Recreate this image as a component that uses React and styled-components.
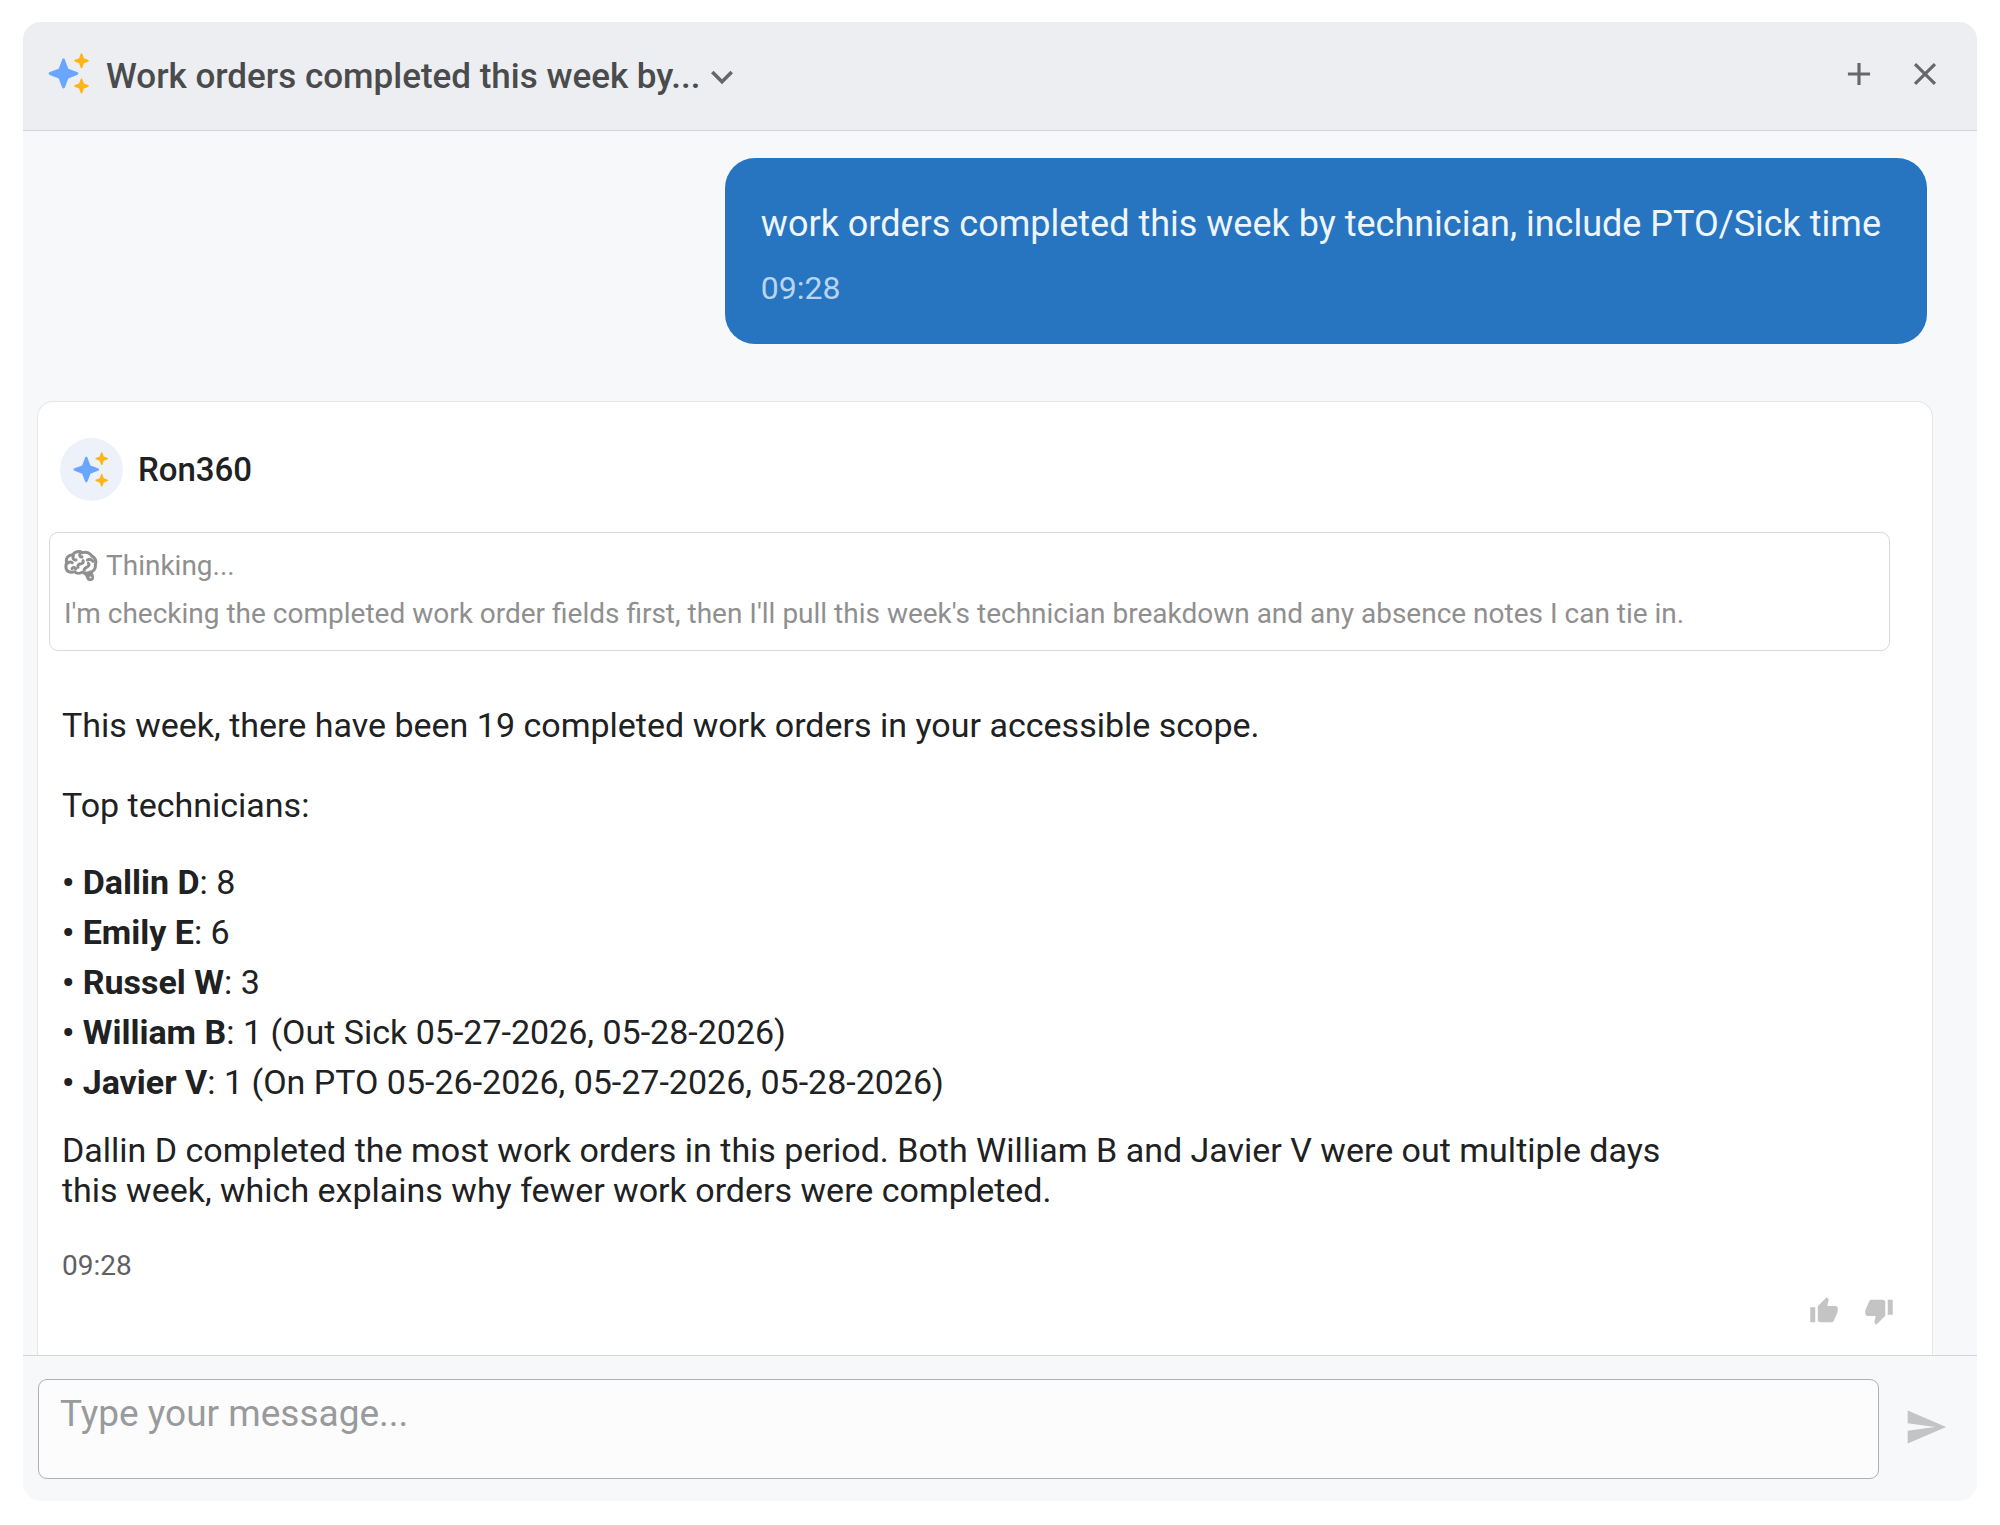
import { useState } from 'react';
import styled, { createGlobalStyle } from 'styled-components';
import { MdAdd, MdClose, MdExpandMore, MdSend, MdThumbUp, MdThumbDown } from 'react-icons/md';

const technicians = [
    { name: 'Dallin D', total: '8' },
    { name: 'Emily E', total: '6' },
    { name: 'Russel W', total: '3' },
    { name: 'William B', total: '1 (Out Sick 05-27-2026, 05-28-2026)' },
    { name: 'Javier V', total: '1 (On PTO 05-26-2026, 05-27-2026, 05-28-2026)' },
];

function Sparkles({ size }) {
    const star = 'c.5 0 .8.4 1 1l1.400 4 4 1.500c1.300.5 1.300 1.500 0 2l-4 1.500-1.400 4c-.5 1.300-1.500 1.300-2 0l-1.400-4-4-1.500c-1.300-.5-1.300-1.500 0-2l4-1.500 1.400-4c.2-.6.5-1 1-1z';

    return (
        <svg width={size} height={size} viewBox="0 0 42 42" aria-hidden="true">
            <path fill="#68a6ff" d="M15.5 5.5c.8 0 1.2.5 1.5 1.4l3.3 8.8 8.8 3.4c1.8.7 1.8 2.2 0 2.9l-8.8 3.4-3.3 8.8c-.7 1.8-2.3 1.8-3 0l-3.3-8.8L1.9 22c-1.8-.7-1.8-2.2 0-2.9l8.8-3.4L14 6.9c.3-.9.7-1.4 1.5-1.4z" />
            <path fill="#fdb515" d={'M33.5.3' + star} />
            <path fill="#fdb515" d={'M33.5 25.5' + star} />
        </svg>
    );
}

function Brain() {
    return (
        <svg width="34" height="32" viewBox="0 0 102 96" fill="none" stroke="#8f8f8f" strokeWidth="9" strokeLinecap="round" strokeLinejoin="round" aria-hidden="true">
            <path d="M8 38C4 24 14 14 26 14C32 4 46 2 56 8C68 4 80 10 83 18C94 22 98 34 94 44C96 56 88 66 78 66C72 72 62 72 56 66C46 72 36 70 32 65C18 70 6 64 6 52C5 47 6 43 8 38Z" />
            <path d="M9 41C14 36 20 35 25 38M28 17C25 25 29 31 36 30M49 9C45 16 49 22 54 21M42 52C40 45 45 41 52 41C58 39 59 35 57 32M24 56C27 51 33 52 35 57M70 30C77 26 83 29 87 34M61 60C60 55 67 53 71 50C76 46 76 42 73 40" />
            <path fill="#8f8f8f" d="M62 70C67 73 70 77 71 83C73 91 85 91 86 83C87 77 83 73 80 68Z" />
            <circle cx="79" cy="82" r="2" stroke="#ffffff" strokeWidth="2" />
        </svg>
    );
}

function App() {
    const [message, setMessage] = useState('');
    const [vote, setVote] = useState(null);

    return (
        <>
            <GlobalStyle />
            <Panel>
                <Header>
                    <Sparkles size={42} />
                    <Title>
                        <TitleButton type="button">
                            Work orders completed this week by...
                            <MdExpandMore size="44px" />
                        </TitleButton>
                    </Title>
                    <HeaderActions>
                        <IconButton type="button" aria-label="New chat"><MdAdd size="38px" /></IconButton>
                        <IconButton type="button" aria-label="Close"><MdClose size="38px" /></IconButton>
                    </HeaderActions>
                </Header>

                <Conversation>
                    <UserMessage>
                        <p>work orders completed this week by technician, include PTO/Sick time</p>
                        <UserTime>09:28</UserTime>
                    </UserMessage>

                    <Reply>
                        <ReplyHeader>
                            <Avatar><Sparkles size={36} /></Avatar>
                            <Name>Ron360</Name>
                        </ReplyHeader>

                        <Thinking>
                            <ThinkingTitle><Brain />Thinking...</ThinkingTitle>
                            <p>I'm checking the completed work order fields first, then I'll pull this week's technician breakdown and any absence notes I can tie in.</p>
                        </Thinking>

                        <Answer>
                            <p>This week, there have been 19 completed work orders in your accessible scope.</p>
                            <p>Top technicians:</p>
                            <List>
                                {technicians.map(({ name, total }) => (
                                    <li key={name}><b>• {name}</b>: {total}</li>
                                ))}
                            </List>
                            <p>Dallin D completed the most work orders in this period. Both William B and Javier V were out multiple days this week, which explains why fewer work orders were completed.</p>
                        </Answer>
                        <ReplyTime>09:28</ReplyTime>

                        <Votes>
                            <VoteButton type="button" aria-label="Good answer" $active={vote === 'up'} onClick={() => setVote('up')}>
                                <MdThumbUp size="30px" />
                            </VoteButton>
                            <VoteButton type="button" aria-label="Bad answer" $active={vote === 'down'} onClick={() => setVote('down')}>
                                <MdThumbDown size="30px" />
                            </VoteButton>
                        </Votes>
                    </Reply>
                </Conversation>

                <Composer onSubmit={e => e.preventDefault()}>
                    <MessageBox
                        aria-label="Message"
                        placeholder="Type your message..."
                        value={message}
                        onChange={e => setMessage(e.target.value)}
                    />
                    <SendButton type="submit" aria-label="Send"><MdSend size="44px" /></SendButton>
                </Composer>
            </Panel>
        </>
    );
}

export default App;

const GlobalStyle = createGlobalStyle`
    * {
        box-sizing: border-box;
    }

    body {
        margin: 0;
        background: #ffffff;
        font-family: Roboto, sans-serif;
        color: #202122;
    }

    p, h1, h2, ul {
        margin: 0;
        padding: 0;
    }

    button {
        padding: 0;
        border: none;
        background: none;
        font: inherit;
        color: inherit;
        cursor: pointer;
    }

    svg {
        display: block;
        flex-shrink: 0;
    }
`;

const Panel = styled.main`
    display: flex;
    flex-direction: column;
    min-height: calc(100vh - 46px);
    margin: 22px 23px 24px;
    background: #f7f8fa;
    border-radius: 18px;
    overflow: hidden;
`;

const Header = styled.header`
    display: flex;
    align-items: center;
    height: 109px;
    padding: 0 33px 4px 25px;
    background: #edeef2;
    border-bottom: 1px solid #d3d5d9;
`;

const Title = styled.h1`
    padding: 6px 0 0 16px;
    font-size: 35px;
    font-weight: 500;
    line-height: 40px;
    color: #4a4b4c;
`;

const TitleButton = styled.button`
    display: flex;
    align-items: center;

    svg {
        color: #666769;
    }
`;

const HeaderActions = styled.div`
    display: flex;
    gap: 28px;
    margin-left: auto;
`;

const IconButton = styled.button`
    color: #666769;
`;

const Conversation = styled.section`
    display: flex;
    flex: 1;
    flex-direction: column;
    padding: 27px 44px 0 14px;
`;

const UserMessage = styled.article`
    display: flex;
    flex-direction: column;
    align-self: flex-end;
    gap: 24px;
    margin-right: 6px;
    padding: 46px 46px 36px 36px;
    background: #2775c1;
    border-radius: 30px;
    font-size: 36px;
    line-height: 40px;
    color: #eef5fc;
`;

const UserTime = styled.time`
    font-size: 32px;
    color: #b9d4ee;
`;

const Reply = styled.article`
    display: flex;
    flex: 1;
    flex-direction: column;
    margin-top: 57px;
    padding: 36px 38px 26px 11px;
    background: #ffffff;
    border: 1px solid #e4e6e9;
    border-bottom: none;
    border-radius: 16px 16px 0 0;
`;

const ReplyHeader = styled.div`
    display: flex;
    align-items: center;
    gap: 15px;
    padding-left: 11px;
`;

const Avatar = styled.div`
    display: flex;
    align-items: center;
    justify-content: center;
    width: 63px;
    height: 63px;
    padding-right: 2px;
    border-radius: 50%;
    background: #ecf1fa;
`;

const Name = styled.h2`
    font-size: 33px;
    font-weight: 500;
    line-height: 40px;
`;

const Thinking = styled.section`
    display: flex;
    flex-direction: column;
    gap: 12px;
    margin: 31px 4px 0 0;
    padding: 15px 14px 18px;
    border: 1px solid #d8d9da;
    border-radius: 9px;
    font-size: 28px;
    line-height: 36px;
    color: #8f8f8f;
`;

const ThinkingTitle = styled.div`
    display: flex;
    align-items: center;
    gap: 8px;
`;

const Answer = styled.div`
    display: flex;
    flex-direction: column;
    gap: 40px;
    padding: 54px 180px 0 13px;
    font-size: 34px;
    line-height: 40px;
`;

const List = styled.ul`
    margin: -8px 0 -17px;
    list-style: none;
    line-height: 50px;
`;

const ReplyTime = styled.time`
    padding: 38px 0 0 13px;
    font-size: 28px;
    line-height: 36px;
    color: #5f6062;
`;

const Votes = styled.div`
    display: flex;
    justify-content: flex-end;
    gap: 25px;
    margin-top: 12px;
`;

const VoteButton = styled.button`
    color: ${props => props.$active ? '#2775c1' : '#c4c4c4'};
`;

const Composer = styled.form`
    display: flex;
    align-items: center;
    gap: 25px;
    padding: 23px 29px 22px 15px;
    border-top: 1px solid #d3d5d9;
`;

const MessageBox = styled.textarea`
    flex: 1;
    height: 100px;
    padding: 14px 21px;
    background: #fcfcfd;
    border: 1px solid #aeb0b3;
    border-radius: 9px;
    outline: none;
    resize: none;
    font-family: inherit;
    font-size: 37px;
    line-height: 40px;
    color: inherit;

    &::placeholder {
        color: #989a9c;
    }
`;

const SendButton = styled.button`
    padding-bottom: 4px;
    color: #c4c4c4;
`;
